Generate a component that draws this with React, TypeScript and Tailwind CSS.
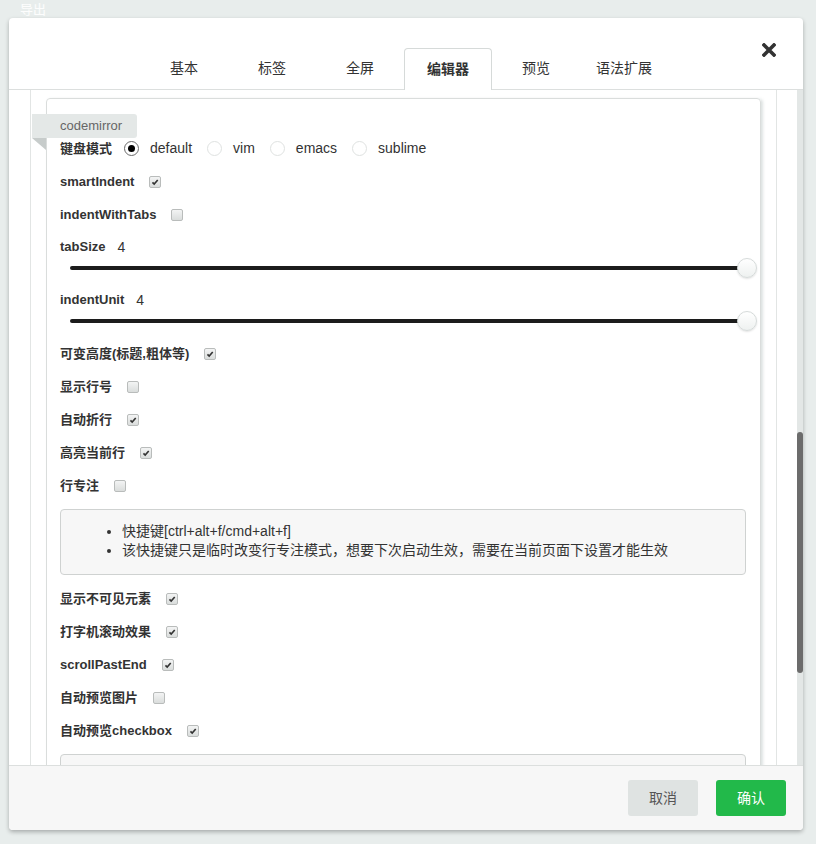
import React from 'react';

const font = "font-['Liberation_Sans','Noto_Sans_CJK_SC',sans-serif]";

const tabs = ['基本', '标签', '全屏', '编辑器', '预览', '语法扩展'];

const Checkbox: React.FC<{ checked?: boolean }> = ({ checked }) => (
  <span className="flex h-[12px] w-[12px] items-center justify-center rounded-[2px] border border-[#b9bcbb] bg-gradient-to-b from-[#f3f4f4] to-[#dadddc]">
    {checked && (
      <svg viewBox="0 0 10 10" className="h-[8px] w-[8px]">
        <path d="M1.8 5.4 L4 7.6 L8.4 2.4" fill="none" stroke="#333" strokeWidth="2" />
      </svg>
    )}
  </span>
);

const Radio: React.FC<{ checked?: boolean; label: string }> = ({ checked, label }) => (
  <label className="flex items-center gap-[11px]">
    <span
      className={`flex h-[15px] w-[15px] items-center justify-center rounded-full border bg-white ${
        checked ? 'border-[#6a6a6a]' : 'border-[#dfe2e1]'
      }`}
    >
      {checked && <span className="h-[7px] w-[7px] rounded-full bg-black" />}
    </span>
    <span className="text-[14px] text-[#333]">{label}</span>
  </label>
);

const CheckRow: React.FC<{ label: string; checked?: boolean }> = ({ label, checked }) => (
  <div className="flex h-[33px] items-center gap-[15px]">
    <span className="text-[13px] font-bold text-[#333]">{label}</span>
    <Checkbox checked={checked} />
  </div>
);

const SliderGroup: React.FC<{ label: string; value: number }> = ({ label, value }) => (
  <div>
    <div className="flex h-[32px] items-center gap-[12px]">
      <span className="text-[13px] font-bold text-[#333]">{label}</span>
      <span className="text-[14px] text-[#333]">{value}</span>
    </div>
    <div className="h-[21px] pl-[10px] pt-[3px]">
      <div className="relative h-[4px] w-[677px] rounded-full bg-[#1c1c1c]">
        <span className="absolute right-[-10px] top-[-8px] h-[20px] w-[20px] rounded-full border border-[#d6dbda] bg-gradient-to-b from-white to-[#eef1f0] shadow-[0_1px_2px_rgba(0,0,0,0.12)]" />
      </div>
    </div>
  </div>
);

export default function App() {
  return (
    <div className={`flex h-[844px] w-[816px] flex-col bg-[#e8edec] ${font}`}>
      <div className="h-[18px] pl-[20px] pt-[3px] text-[13px] leading-[14px] text-white/90">导出</div>

      <div className="ml-[9px] flex h-[812px] w-[794px] flex-col overflow-hidden rounded-[4px] bg-white shadow-[0_2px_4px_rgba(0,0,0,0.28)]">
        {/* header with tabs */}
        <div className="flex h-[72px] shrink-0 border-b border-[#dcdfde] pl-[131px]">
          <div className="flex items-end">
            {tabs.map((t) =>
              t === '编辑器' ? (
                <div
                  key={t}
                  className="mb-[-1px] flex h-[42px] w-[88px] items-center justify-center rounded-t-[4px] border border-b-0 border-[#d6dad9] bg-white pb-[1px] text-[14px] font-bold text-[#333]"
                >
                  {t}
                </div>
              ) : (
                <div key={t} className="flex h-[41px] w-[88px] items-center justify-center text-[14px] text-[#333]">
                  {t}
                </div>
              )
            )}
          </div>
          <button className="ml-auto mr-[27px] mt-[25px] self-start">
            <svg viewBox="0 0 14 14" className="h-[14px] w-[14px]">
              <path d="M2 2 L12 12 M12 2 L2 12" stroke="#333" strokeWidth="3.6" strokeLinecap="square" />
            </svg>
          </button>
        </div>

        {/* scrolling body */}
        <div className="flex min-h-0 flex-1">
          <div className="w-[21px] shrink-0" />
          <div className="w-[747px] shrink-0 overflow-hidden border-x border-[#e2e5e4] px-[15px] pt-[8px]">
            <div className="relative rounded-[4px] border border-[#dadddc] pl-[13px] pr-[14px] pt-[33px] pb-[40px] shadow-[2px_1px_3px_rgba(120,140,135,0.25)]">
              <div className="absolute left-[-15px] top-[15px] flex h-[24px] w-[105px] items-center rounded-r-[3px] bg-[#e4e8e7] pl-[28px] text-[13px] text-[#666]">
                codemirror
              </div>
              <svg className="absolute left-[-15px] top-[39px] h-[12px] w-[14px]" viewBox="0 0 14 12">
                <path d="M0 0 L14 0 L14 12 Z" fill="#c7cccb" />
              </svg>

              <div className="flex h-[33px] items-center gap-[15px]">
                <span className="mr-[-3px] text-[13px] font-bold text-[#333]">键盘模式</span>
                <Radio checked label="default" />
                <Radio label="vim" />
                <Radio label="emacs" />
                <Radio label="sublime" />
              </div>
              <CheckRow label="smartIndent" checked />
              <CheckRow label="indentWithTabs" />
              <SliderGroup label="tabSize" value={4} />
              <SliderGroup label="indentUnit" value={4} />
              <CheckRow label="可变高度(标题,粗体等)" checked />
              <CheckRow label="显示行号" />
              <CheckRow label="自动折行" checked />
              <CheckRow label="高亮当前行" checked />
              <CheckRow label="行专注" />

              <div className="mt-[7px] h-[66px] rounded-[4px] border border-[#cfd2d1] bg-[#f7f7f7] pt-[12px]">
                <ul className="list-disc pl-[61px] text-[14px] leading-[19px] text-[#333]">
                  <li>快捷键[ctrl+alt+f/cmd+alt+f]</li>
                  <li>该快捷键只是临时改变行专注模式，想要下次启动生效，需要在当前页面下设置才能生效</li>
                </ul>
              </div>

              <div className="mt-[7px]">
                <CheckRow label="显示不可见元素" checked />
                <CheckRow label="打字机滚动效果" checked />
                <CheckRow label="scrollPastEnd" checked />
                <CheckRow label="自动预览图片" />
                <CheckRow label="自动预览checkbox" checked />
              </div>

              <div className="mt-[7px] h-[60px] rounded-[4px] border border-[#cfd2d1] bg-[#f7f7f7]" />
            </div>
          </div>
          <div className="w-[20px] shrink-0" />
          <div className="flex w-[6px] shrink-0 flex-col bg-[#e3e7e6] pt-[342px]">
            <div className="h-[241px] rounded-full bg-[#6c6c6c]" />
          </div>
        </div>

        {/* footer */}
        <div className="flex h-[65px] shrink-0 items-center justify-end gap-[18px] border-t border-[#dcdfde] bg-[#f7f7f7] pr-[17px]">
          <button className="h-[36px] w-[70px] rounded-[3px] bg-[#dfe3e2] text-[14px] text-[#555]">取消</button>
          <button className="h-[36px] w-[70px] rounded-[3px] bg-[#22b94a] text-[14px] text-white">确认</button>
        </div>
      </div>
    </div>
  );
}
